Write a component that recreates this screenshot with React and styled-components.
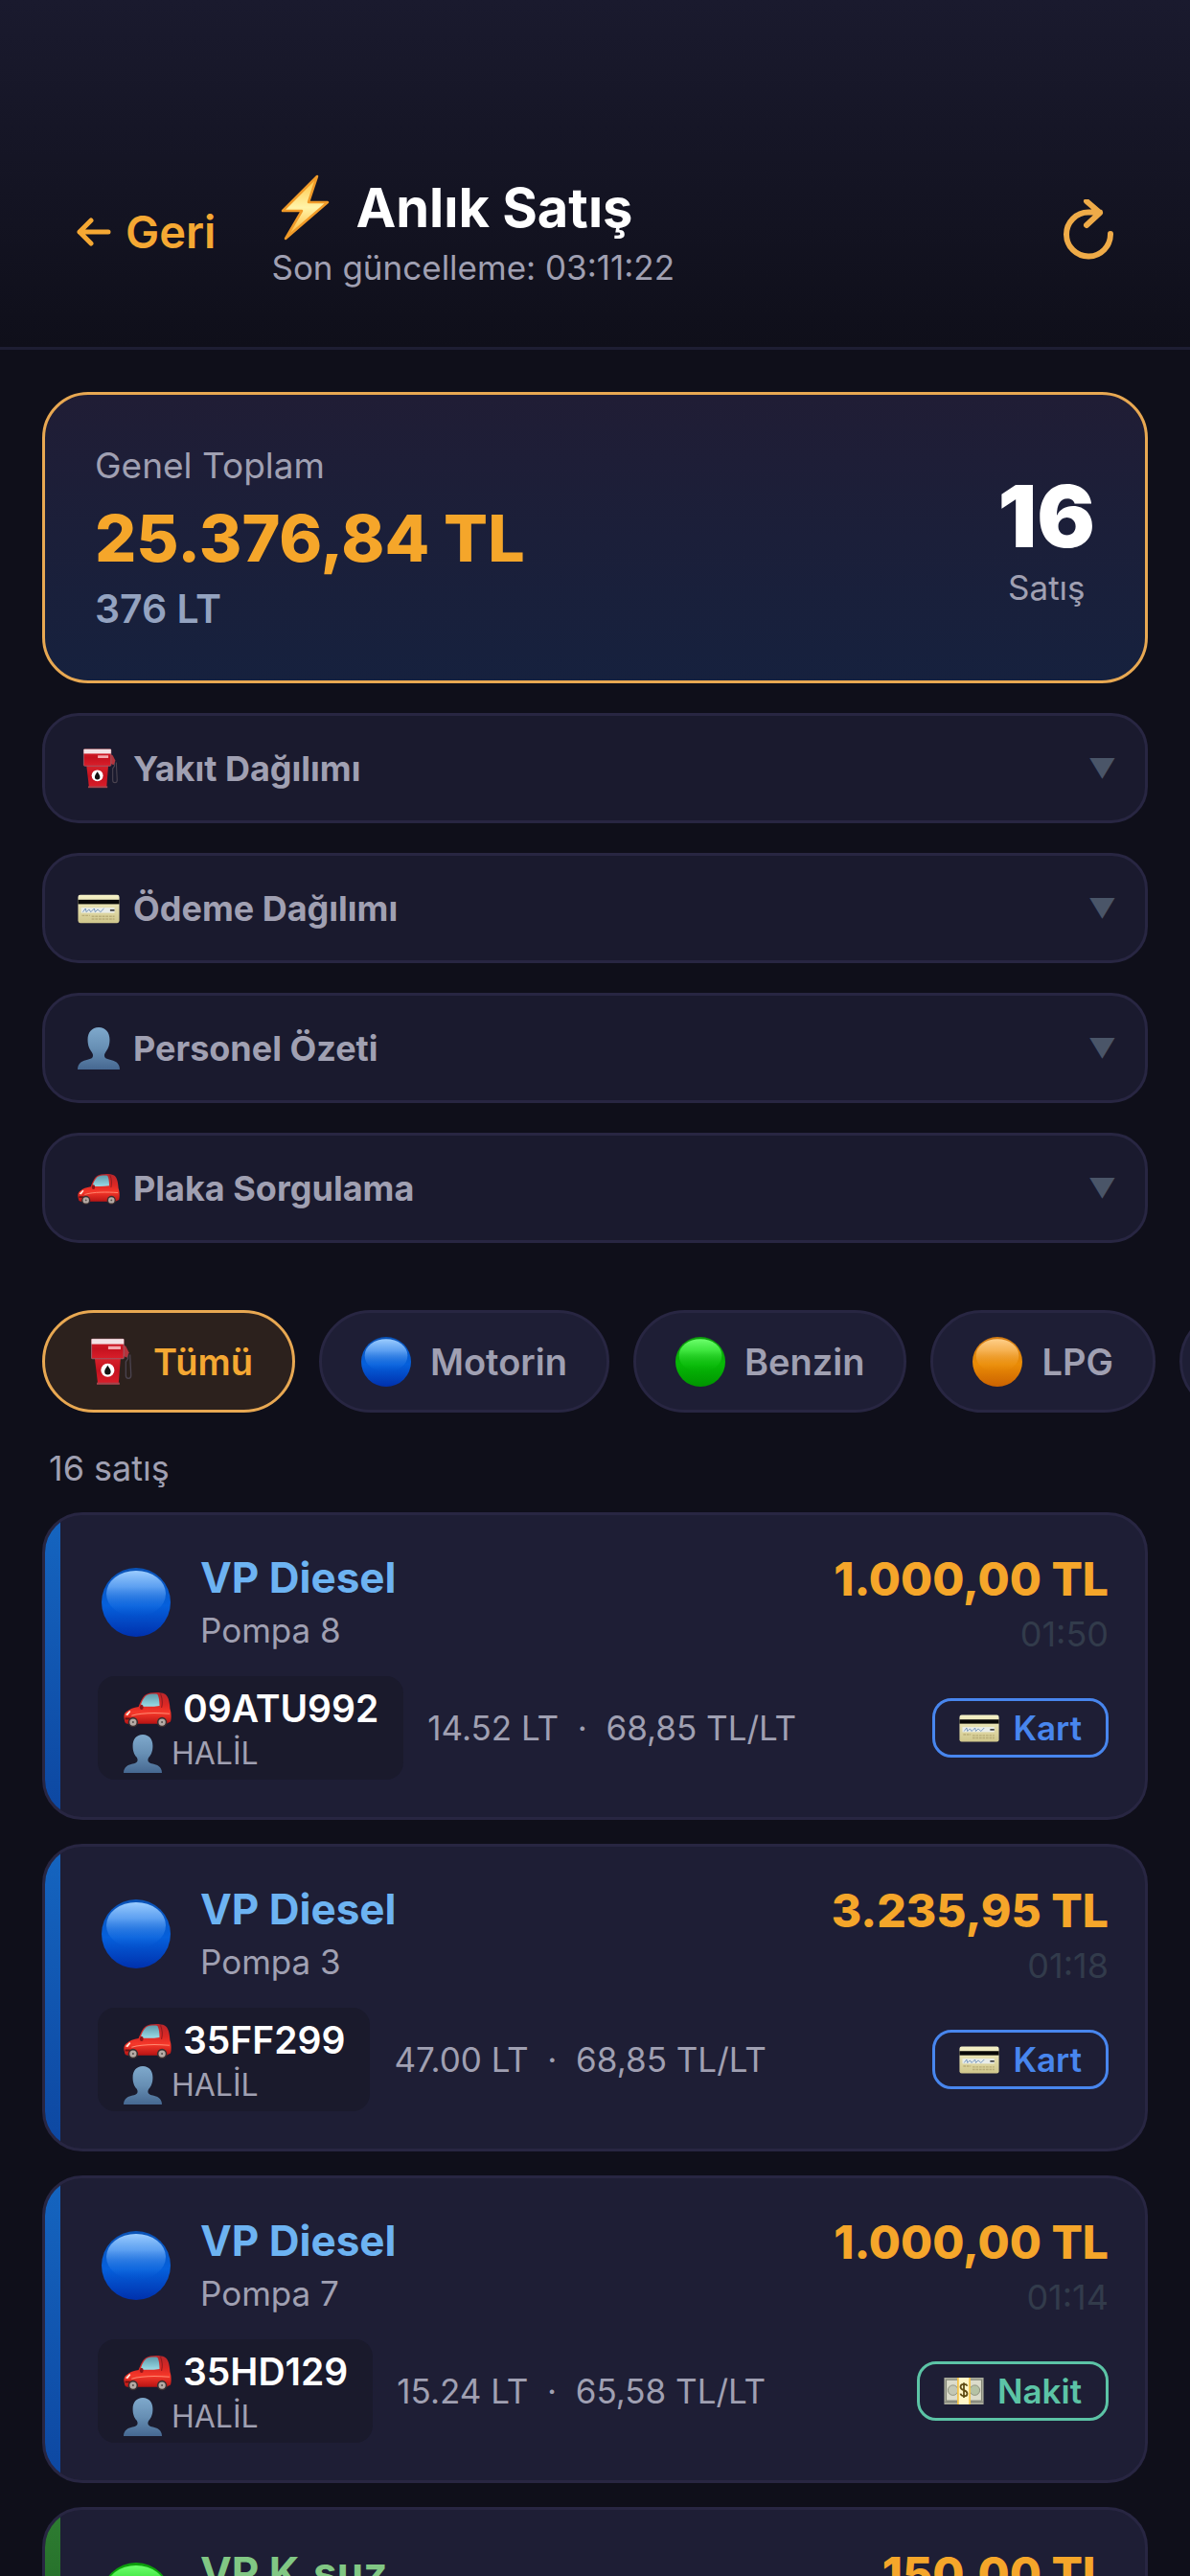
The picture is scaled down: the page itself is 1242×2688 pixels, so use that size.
import React, { useState } from "react";
import styled, { createGlobalStyle } from "styled-components";

const GlobalStyle = createGlobalStyle`
  * {
    box-sizing: border-box;
  }

  body {
    margin: 0;
    background: #0f0f1a;
    font-family: Inter, "Noto Sans", sans-serif;
    -webkit-font-smoothing: antialiased;
  }

  button {
    font-family: inherit;
    cursor: pointer;
  }

  h1, h2, p {
    margin: 0;
  }
`;

const Page = styled.div`
  display: flex;
  flex-direction: column;
  height: 100vh;
  overflow: hidden;
  background: #0f0f1a;
  color: #a0a0b2;
`;

const Header = styled.header`
  display: flex;
  align-items: center;
  gap: 58px;
  padding: 182px 78px 61px 80px;
  border-bottom: 3px solid #1e1e33;
  background: linear-gradient(to bottom, #1a1a2e, #0f0f1a);
`;

const BackButton = styled.button`
  display: flex;
  align-items: center;
  gap: 15px;
  padding: 0;
  border: none;
  background: transparent;
  color: #f5a833;
  font-size: 47px;
  line-height: 60px;
  font-weight: 600;
`;

const TitleBlock = styled.div`
  flex: 1;
`;

const Title = styled.h1`
  display: flex;
  align-items: center;
  gap: 18px;
  margin-bottom: 5px;
  color: #ffffff;
  font-size: 56px;
  line-height: 70px;
  font-weight: 700;
`;

const Subtitle = styled.p`
  font-size: 35px;
  line-height: 44px;
`;

const IconButton = styled.button`
  display: flex;
  padding: 0;
  border: none;
  background: transparent;
`;

const Content = styled.main`
  flex: 1;
  min-height: 0;
  overflow-y: auto;
  padding: 44px 44px 0;
  scrollbar-width: none;
`;

const Stack = styled.div`
  display: flex;
  flex-direction: column;
  gap: 31px;
`;

const SummaryCard = styled.section`
  display: flex;
  align-items: center;
  justify-content: space-between;
  padding: 50px 52px 52px;
  border: 3px solid #e8a852;
  border-radius: 48px;
  background: linear-gradient(to bottom, #201d35, #16213e);
`;

const SummaryLeft = styled.div`
  display: flex;
  flex-direction: column;
  gap: 8px;
`;

const SummaryLabel = styled.p`
  font-size: 37px;
  line-height: 48px;
`;

const SummaryAmount = styled.p`
  color: #f5a62a;
  font-size: 68px;
  line-height: 86px;
  font-weight: 800;
`;

const SummaryLiters = styled.p`
  color: #94a3c0;
  font-size: 41px;
  line-height: 46px;
  font-weight: 600;
`;

const SummaryRight = styled.div`
  padding-top: 6px;
  text-align: center;
`;

const SummaryCount = styled.p`
  color: #ffffff;
  font-size: 90px;
  line-height: 100px;
  font-weight: 900;
`;

const SummaryCountLabel = styled.p`
  font-size: 35px;
  line-height: 48px;
`;

const Section = styled.button`
  display: flex;
  align-items: center;
  gap: 14px;
  width: 100%;
  height: 115px;
  padding: 0 30px 0 34px;
  border: 3px solid #282642;
  border-radius: 38px;
  background: #1a1a2e;
  color: #a0a0b2;
  font-size: 36px;
  font-weight: 700;
  text-align: left;
`;

const SectionTitle = styled.span`
  flex: 1;
`;

const Chevron = styled.span`
  color: #4a5568;
  font-size: 28px;
`;

const Filters = styled.div`
  display: flex;
  gap: 25px;
  margin: 70px -44px 35px 0;
  overflow-x: auto;
  scrollbar-width: none;
`;

const Filter = styled.button`
  display: flex;
  flex-shrink: 0;
  align-items: center;
  gap: 20px;
  height: 107px;
  padding: 0 41px;
  border: 3px solid ${({ $active }) => ($active ? "#e8a852" : "#282642")};
  border-radius: 54px;
  background: ${({ $active }) => ($active ? "#2c211d" : "#1e1e35")};
  color: ${({ $active }) => ($active ? "#f5a833" : "#a0a0b2")};
  font-size: 38px;
  font-weight: 600;
`;

const Count = styled.p`
  margin-bottom: 23px;
  padding-left: 7px;
  font-size: 36px;
  line-height: 46px;
`;

const SaleList = styled.div`
  display: flex;
  flex-direction: column;
  gap: 25px;
`;

const SaleCard = styled.article`
  display: flex;
  overflow: hidden;
  border: 3px solid #282642;
  border-radius: 42px;
  background: #1e1e35;
`;

const Stripe = styled.div`
  flex-shrink: 0;
  width: 16px;
  background: ${({ $colors }) => `linear-gradient(to bottom, ${$colors[0]}, ${$colors[1]})`};
`;

const SaleBody = styled.div`
  flex: 1;
  padding: 39px 38px 39px 39px;
`;

const SaleTop = styled.div`
  display: flex;
  align-items: flex-start;
  justify-content: space-between;
  margin-bottom: 21px;
`;

const Fuel = styled.div`
  display: flex;
  align-items: center;
  gap: 31px;
  padding-left: 4px;
`;

const FuelName = styled.h2`
  margin-bottom: 6px;
  color: ${({ $color }) => $color};
  font-size: 44px;
  line-height: 52px;
  font-weight: 700;
`;

const Pump = styled.p`
  font-size: 35px;
  line-height: 46px;
`;

const Totals = styled.div`
  text-align: right;
`;

const Amount = styled.p`
  margin-bottom: 6px;
  color: #f5a62a;
  font-size: 48px;
  line-height: 56px;
  font-weight: 800;
`;

const Time = styled.p`
  color: #323b4b;
  font-size: 36px;
  line-height: 46px;
`;

const SaleBottom = styled.div`
  display: flex;
  align-items: center;
  gap: 25px;
`;

const PlateBox = styled.div`
  padding: 8px 26px 6px 27px;
  border-radius: 18px;
  background: #1a1a2c;
`;

const Plate = styled.p`
  display: flex;
  align-items: center;
  gap: 12px;
  color: #ffffff;
  font-size: 39px;
  line-height: 52px;
  font-weight: 600;
`;

const Person = styled.p`
  display: flex;
  align-items: center;
  gap: 10px;
  font-size: 32px;
  line-height: 42px;
`;

const Meta = styled.p`
  flex: 1;
  font-size: 35px;
  line-height: 46px;
  white-space: pre;
`;

const Badge = styled.span`
  display: flex;
  align-items: center;
  gap: 14px;
  height: 62px;
  padding: 0 25px;
  border: 3px solid ${({ $color }) => $color};
  border-radius: 20px;
  color: ${({ $color }) => $color};
  font-size: 35px;
  font-weight: 600;
`;

const Drawing = styled.svg`
  display: block;
  flex-shrink: 0;
`;

const HiddenDefs = styled.svg`
  position: absolute;
`;

const Gradient = ({ id, stops }) => (
  <linearGradient id={id} x1="0" y1="0" x2="0" y2="1">
    {stops.map(([offset, color, opacity = 1]) => (
      <stop key={offset} offset={offset} stopColor={color} stopOpacity={opacity} />
    ))}
  </linearGradient>
);

const SharedDefs = () => (
  <HiddenDefs width="0" height="0" aria-hidden="true">
    <defs>
      <Gradient id="ball-blue" stops={[[0, "#0a52b5"], [0.55, "#0560dc"], [1, "#0030ac"]]} />
      <Gradient id="ball-green" stops={[[0, "#0c9c0c"], [0.55, "#06b806"], [1, "#009400"]]} />
      <Gradient id="ball-orange" stops={[[0, "#d07a14"], [0.55, "#ea8c06"], [1, "#cb6200"]]} />
      <Gradient id="shine-blue" stops={[[0, "#9ccdff"], [0.35, "#7ab8ff", 0.75], [1, "#0560dc", 0]]} />
      <Gradient id="shine-green" stops={[[0, "#6dff6d"], [0.35, "#50fa50", 0.75], [1, "#06b806", 0]]} />
      <Gradient id="shine-orange" stops={[[0, "#ffd08a"], [0.35, "#ffc26a", 0.75], [1, "#ea8c06", 0]]} />
      <Gradient id="person" stops={[[0, "#7fa9cc"], [0.5, "#678fb4"], [1, "#466891"]]} />
      <Gradient id="car" stops={[[0, "#b5262b"], [0.4, "#dd2824"], [0.65, "#f6382a"], [1, "#b81414"]]} />
      <Gradient id="glass" stops={[[0, "#5e9bab"], [1, "#9adbe6"]]} />
      <Gradient id="pump" stops={[[0, "#d8222c"], [0.5, "#c5121f"], [1, "#d91e2a"]]} />
      <Gradient id="card" stops={[[0, "#f5f1c8"], [1, "#cfc68b"]]} />
      <Gradient id="bolt" stops={[[0, "#ffc23c"], [0.5, "#fff3a8"], [1, "#ffb22e"]]} />
    </defs>
  </HiddenDefs>
);

const Ball = ({ color, size }) => (
  <Drawing width={size} height={size} viewBox="0 0 72 72" aria-hidden="true">
    <circle cx="36" cy="36" r="36" fill={`url(#ball-${color})`} />
    <ellipse cx="36" cy="27" rx="31" ry="24" fill={`url(#shine-${color})`} />
  </Drawing>
);

const FuelPump = ({ size }) => (
  <Drawing width={size} height={size} viewBox="0 0 48 48" aria-hidden="true">
    <path d="M39 12 l3 3 v6 l-2 3 v13 c0 4 5 4 5 0 l-1 -20" fill="none" stroke="#4b4450" strokeWidth="1.2" />
    <path d="M36 7 l4 2 l3 6 l-2 5 l-4 -2 z" fill="#b5343d" />
    <path d="M10 20 h25 l-2 25 h-20 z" fill="url(#pump)" />
    <rect x="7" y="2" width="31" height="19" rx="1" fill="url(#pump)" stroke="#9c5a66" strokeWidth="1" />
    <rect x="7" y="2" width="31" height="5" fill="#f2e3e6" />
    <rect x="23" y="9" width="12" height="3" fill="#f4a9ae" />
    <path d="M12 45 h22" stroke="#a5444c" strokeWidth="2" />
    <circle cx="22.5" cy="32" r="6.5" fill="#ffffff" />
    <path d="M22.5 27.5 c2 3 3 4.500 3 6 a3 3 0 0 1 -6 0 c0 -1.500 1 -3 3 -6" fill="#141414" />
  </Drawing>
);

const CreditCard = ({ size }) => (
  <Drawing width={size} height={size} viewBox="0 0 48 48" aria-hidden="true">
    <rect x="0.5" y="8.5" width="47" height="32" rx="2.5" fill="url(#card)" />
    <rect x="0.5" y="14" width="47" height="5" fill="#080808" />
    <rect x="4" y="23" width="38" height="6" fill="#e9edea" />
    <path d="M6 28 l3 -4 l1 4 l3 -3 l2 3 l4 -4 l1 4 l3 -3 l3 3 l4 -4" fill="none" stroke="#6c8fb8" strokeWidth="1" />
    <path d="M37 26 h5" stroke="#444444" strokeWidth="2" />
    <path d="M5 32 h9 M16 33 h26 M16 36 h26" stroke="#b9ad78" strokeWidth="1.5" strokeDasharray="3 1" />
  </Drawing>
);

const Silhouette = ({ size }) => (
  <Drawing width={size} height={size} viewBox="0 0 48 48" aria-hidden="true">
    <path
      d="M24 0 c8 0 12.500 6 12.500 14 c0 7 -2 11 -4.500 14 c-1.500 2 -2 4 -1 6 c2 3 9 2.500 13 5.500 c2.500 2 4 4.500 4 8.500 h-48 c0 -4 1.500 -6.500 4 -8.500 c4 -3 11 -2.500 13 -5.500 c1 -2 0.500 -4 -1 -6 c-2.500 -3 -4.500 -7 -4.500 -14 c0 -8 4.500 -14 12.500 -14 z"
      fill="url(#person)"
    />
  </Drawing>
);

const Car = ({ size }) => (
  <Drawing width={size} height={size} viewBox="0 0 48 48" aria-hidden="true">
    <path
      d="M1 36 C0 32 0 29 3 27 C6 24 10 23 15 22 C17 17 19 12 22 10 C26 7 37 7 41 9 C45 11 46 17 46.500 24 C48 28 48 35 47 37 L43 39 H4 C2 39 1 38 1 36 Z"
      fill="url(#car)"
    />
    <path d="M17 21.500 C18 16 21 12 23 10.500 C26 9 32 9 34 9.500 C35.500 12 36 17 36 21 C30 22 23 22 17 21.500 Z" fill="url(#glass)" />
    <path d="M37 9 c2 5 2 10 1 14" fill="none" stroke="#8f1a1e" strokeWidth="1" />
    <path d="M8 31 c10 -3 26 -3 38 -2" fill="none" stroke="#ff8a72" strokeWidth="1" />
    <ellipse cx="18" cy="22.5" rx="1.8" ry="2.5" fill="#8f1518" />
    <path d="M2 30 l4 -4 l1 1 l-3 4 z" fill="#ffe9df" />
    <path d="M1.500 34 h5" stroke="#701010" strokeWidth="2" />
    <circle cx="9.5" cy="37.5" r="5" fill="#3a2f30" />
    <circle cx="9.5" cy="37.5" r="3.5" fill="#b5aaa4" />
    <circle cx="9.5" cy="37.5" r="1" fill="#5a5250" />
    <circle cx="38.5" cy="37.5" r="5" fill="#3a2f30" />
    <circle cx="38.5" cy="37.5" r="3.5" fill="#b5aaa4" />
    <circle cx="38.5" cy="37.5" r="1" fill="#5a5250" />
  </Drawing>
);

const Banknote = ({ size }) => (
  <Drawing width={size} height={size} viewBox="0 0 48 48" aria-hidden="true">
    <rect x="0.5" y="8" width="47" height="32" fill="#a9ab9b" />
    <rect x="3" y="10.5" width="42" height="25" fill="#dcdccb" stroke="#77796b" strokeWidth="1" />
    <circle cx="11" cy="23" r="6" fill="#c3c7b4" stroke="#888c78" strokeWidth="1" />
    <circle cx="37" cy="23" r="6" fill="#b5c2a5" stroke="#888c78" strokeWidth="1" />
    <path d="M1 37 h46" stroke="#787a70" strokeWidth="1" />
    <rect x="16" y="8" width="16" height="32" fill="#f2c34a" />
    <rect x="18" y="8" width="12" height="32" fill="#fff6c8" />
    <path d="M28 18 c-1 -3 -8 -3 -8 1 c0 5 8 3 8 8 c0 4 -7 4 -8 0 M24 14 v18" fill="none" stroke="#5d4a12" strokeWidth="2" />
  </Drawing>
);

const Bolt = () => (
  <Drawing width="70" height="70" viewBox="0 0 70 70" aria-hidden="true">
    <path
      d="M48 2 L12 38 H32 L15 67 L59 29 H39 Z"
      fill="url(#bolt)"
      stroke="#f09a28"
      strokeWidth="2.5"
      strokeLinejoin="round"
    />
  </Drawing>
);

const BackArrow = () => (
  <Drawing width="36" height="36" viewBox="0 0 36 36" aria-hidden="true">
    <path
      d="M33 18 H3 M15 6 L3 18 L15 30"
      fill="none"
      stroke="currentColor"
      strokeWidth="5"
      strokeLinecap="round"
      strokeLinejoin="round"
    />
  </Drawing>
);

const Refresh = () => (
  <Drawing width="56" height="68" viewBox="0 0 56 68" aria-hidden="true">
    <path
      d="M51 36 A23 23 0 1 1 28 13.500 H40 M26 2 L40 14 L26 27"
      fill="none"
      stroke="#efab48"
      strokeWidth="6"
      strokeLinecap="round"
      strokeLinejoin="round"
    />
  </Drawing>
);

const BLUE = { ball: "blue", text: "#6db3f2", stripe: ["#1565c0", "#0d47a1"] };
const GREEN = { ball: "green", text: "#81c784", stripe: ["#2e7d32", "#1b5e20"] };

const sections = [
  { title: "Yakıt Dağılımı", icon: FuelPump },
  { title: "Ödeme Dağılımı", icon: CreditCard },
  { title: "Personel Özeti", icon: Silhouette },
  { title: "Plaka Sorgulama", icon: Car },
];

const filters = [
  { label: "Tümü" },
  { label: "Motorin", ball: "blue" },
  { label: "Benzin", ball: "green" },
  { label: "LPG", ball: "orange" },
  { label: "Diğer", ball: "blue" },
];

const payments = {
  Kart: { color: "#4886ee", icon: CreditCard },
  Nakit: { color: "#5cc4a6", icon: Banknote },
};

const sales = [
  { fuel: "VP Diesel", theme: BLUE, pump: "Pompa 8", total: "1.000,00 TL", time: "01:50", plate: "09ATU992", person: "HALİL", liters: "14.52 LT", price: "68,85 TL/LT", payment: "Kart" },
  { fuel: "VP Diesel", theme: BLUE, pump: "Pompa 3", total: "3.235,95 TL", time: "01:18", plate: "35FF299", person: "HALİL", liters: "47.00 LT", price: "68,85 TL/LT", payment: "Kart" },
  { fuel: "VP Diesel", theme: BLUE, pump: "Pompa 7", total: "1.000,00 TL", time: "01:14", plate: "35HD129", person: "HALİL", liters: "15.24 LT", price: "65,58 TL/LT", payment: "Nakit" },
  { fuel: "VP K.suz", theme: GREEN, total: "150,00 TL" },
];

const PaymentBadge = ({ type }) => {
  const { color, icon: Icon } = payments[type];
  return (
    <Badge $color={color}>
      <Icon size={42} />
      {type}
    </Badge>
  );
};

const Sale = ({ sale }) => (
  <SaleCard>
    <Stripe $colors={sale.theme.stripe} />
    <SaleBody>
      <SaleTop>
        <Fuel>
          <Ball color={sale.theme.ball} size={72} />
          <div>
            <FuelName $color={sale.theme.text}>{sale.fuel}</FuelName>
            <Pump>{sale.pump || "\u00a0"}</Pump>
          </div>
        </Fuel>
        <Totals>
          <Amount>{sale.total}</Amount>
          <Time>{sale.time}</Time>
        </Totals>
      </SaleTop>
      {sale.plate && (
        <SaleBottom>
          <PlateBox>
            <Plate>
              <Car size={50} />
              {sale.plate}
            </Plate>
            <Person>
              <Silhouette size={40} />
              {sale.person}
            </Person>
          </PlateBox>
          <Meta>{`${sale.liters}  ·  ${sale.price}`}</Meta>
          <PaymentBadge type={sale.payment} />
        </SaleBottom>
      )}
    </SaleBody>
  </SaleCard>
);

const App = () => {
  const [filter, setFilter] = useState("Tümü");

  return (
    <Page lang="tr">
      <GlobalStyle />
      <SharedDefs />
      <Header>
        <BackButton type="button">
          <BackArrow />
          Geri
        </BackButton>
        <TitleBlock>
          <Title>
            <Bolt />
            Anlık Satış
          </Title>
          <Subtitle>Son güncelleme: 03:11:22</Subtitle>
        </TitleBlock>
        <IconButton type="button" aria-label="Yenile">
          <Refresh />
        </IconButton>
      </Header>

      <Content>
        <Stack>
          <SummaryCard>
            <SummaryLeft>
              <SummaryLabel>Genel Toplam</SummaryLabel>
              <SummaryAmount>25.376,84 TL</SummaryAmount>
              <SummaryLiters>376 LT</SummaryLiters>
            </SummaryLeft>
            <SummaryRight>
              <SummaryCount>16</SummaryCount>
              <SummaryCountLabel>Satış</SummaryCountLabel>
            </SummaryRight>
          </SummaryCard>

          {sections.map(({ title, icon: Icon }) => (
            <Section key={title} type="button" aria-expanded="false">
              <Icon size={44} />
              <SectionTitle>{title}</SectionTitle>
              <Chevron>▼</Chevron>
            </Section>
          ))}
        </Stack>

        <Filters>
          {filters.map(({ label, ball }) => (
            <Filter
              key={label}
              type="button"
              $active={filter === label}
              onClick={() => setFilter(label)}
            >
              {ball ? <Ball color={ball} size={52} /> : <FuelPump size={52} />}
              {label}
            </Filter>
          ))}
        </Filters>

        <Count>16 satış</Count>

        <SaleList>
          {sales.map((sale, index) => (
            <Sale key={index} sale={sale} />
          ))}
        </SaleList>
      </Content>
    </Page>
  );
};

export default App;
